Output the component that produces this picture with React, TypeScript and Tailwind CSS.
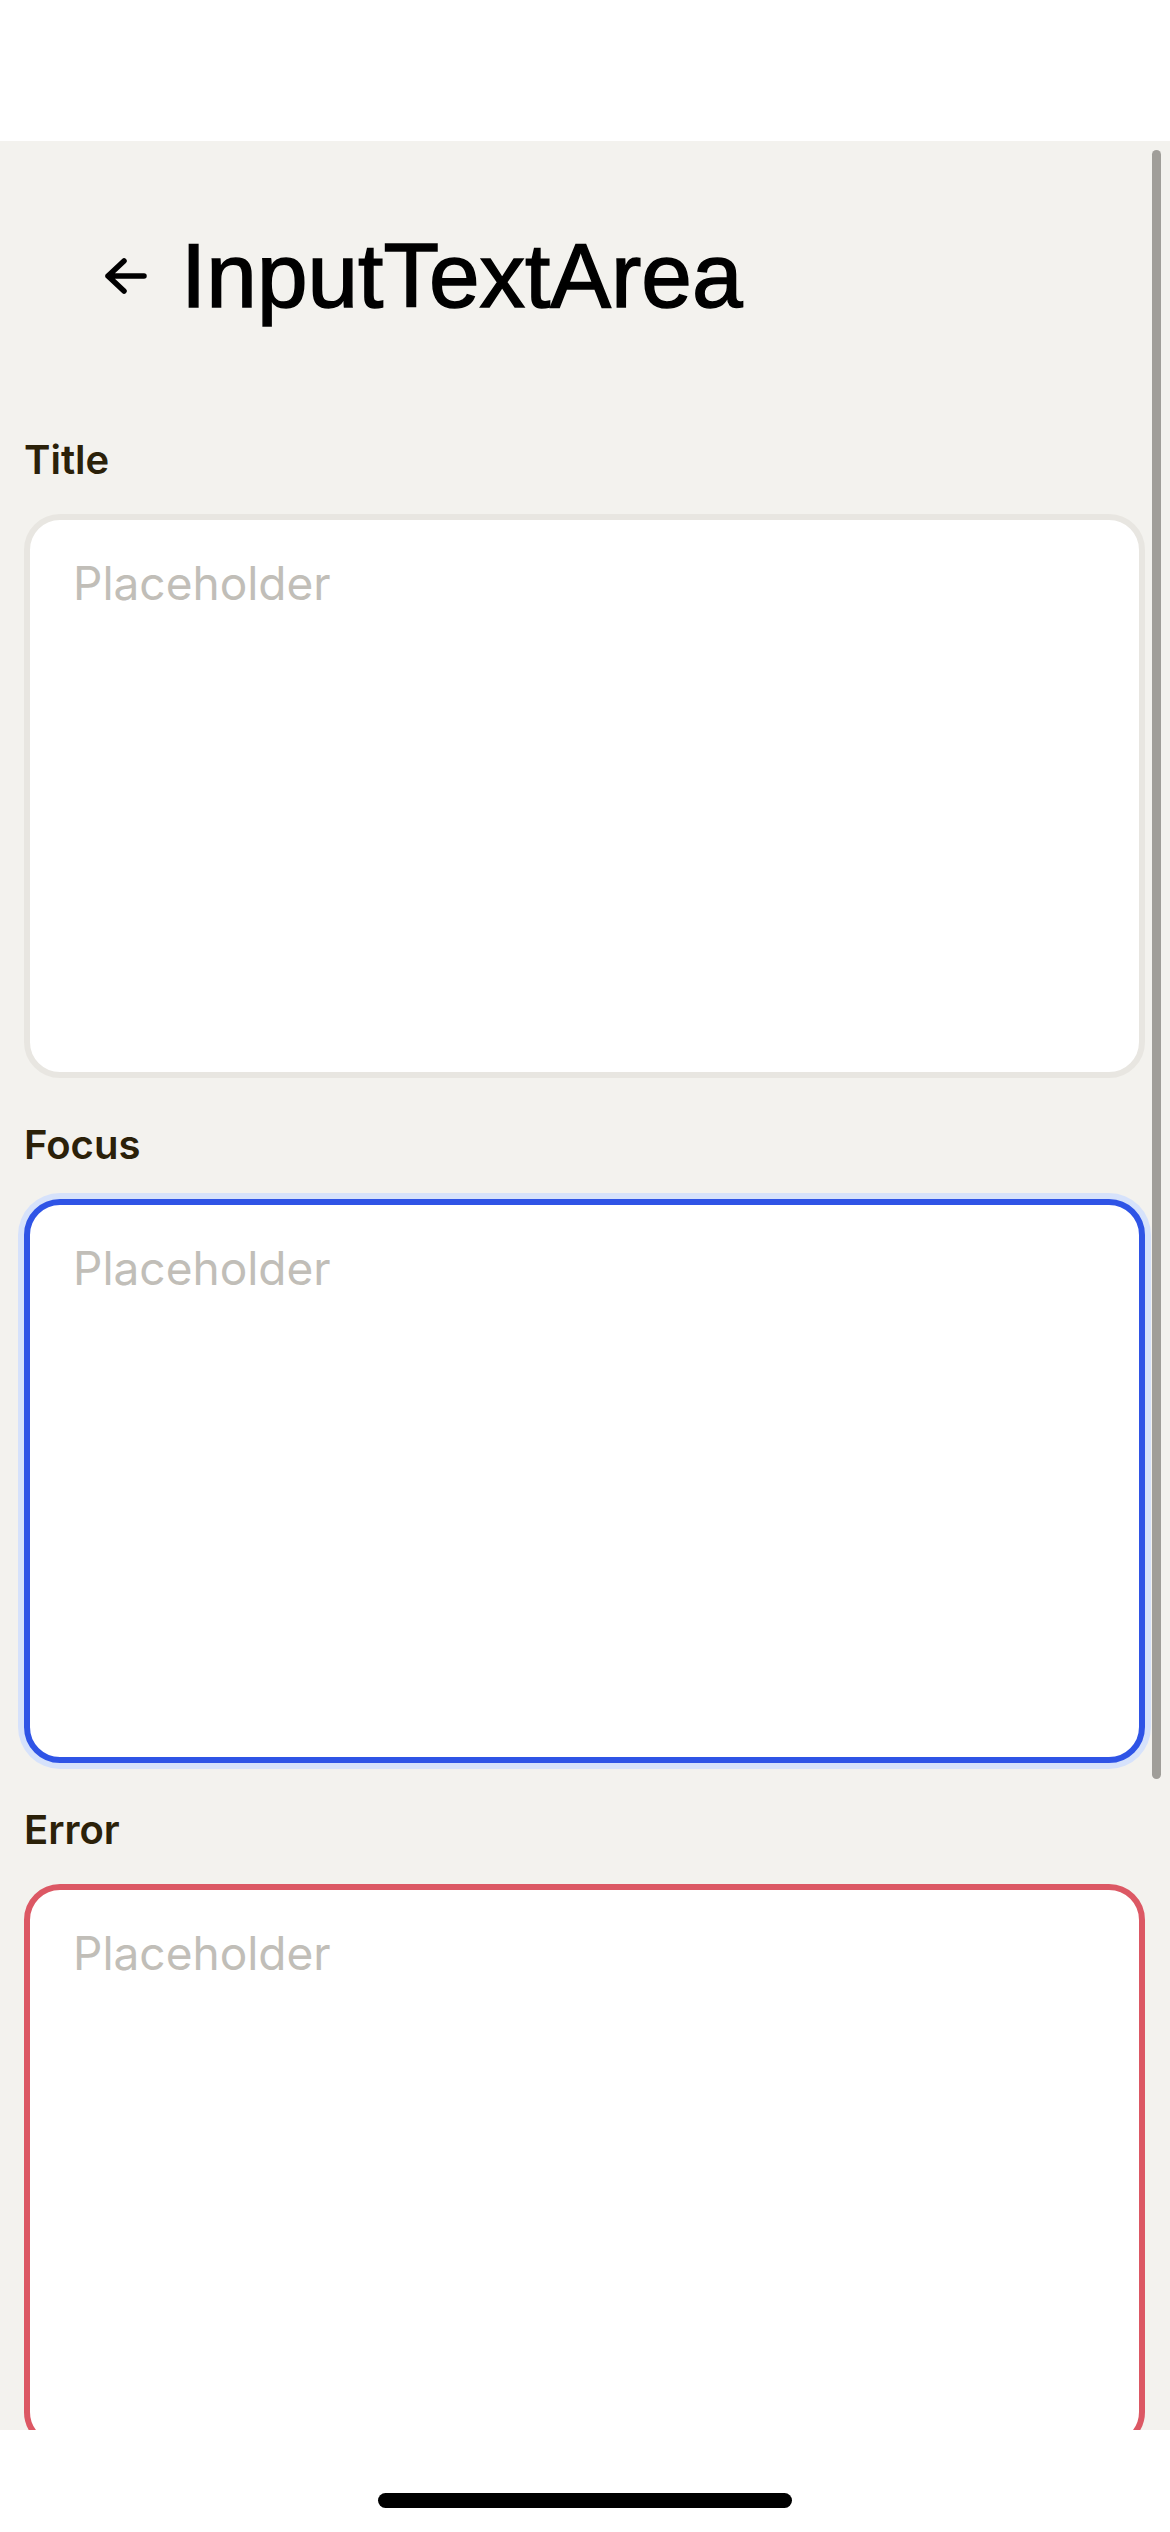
const labelFont = { fontFamily: 'Inter, "Noto Sans", sans-serif' }

type FieldProps = {
  label: string
  state: 'default' | 'focus' | 'error'
}

const Field = ({ label, state }: FieldProps) => {
  const border =
    state === 'focus'
      ? 'border-[#2f54e6] shadow-[0_0_0_6px_#d6e2fb]'
      : state === 'error'
        ? 'border-[#dc5864]'
        : 'border-[#e8e6e1]'

  return (
    <div className="flex flex-col">
      <label className="h-[48px] text-[40px] leading-[48px] font-semibold text-[#2b2109]" style={labelFont}>
        {label}
      </label>
      <textarea
        placeholder="Placeholder"
        className={`mt-[30px] h-[564px] w-full resize-none rounded-[36px] border-[6px] bg-white pt-[35px] pr-[41px] pl-[43px] text-[46px] leading-[56px] text-black outline-none placeholder:text-[#c1beb8] ${border}`}
        style={labelFont}
      />
    </div>
  )
}

export default function App() {
  return (
    <div className="flex h-[2532px] w-[1170px] flex-col bg-white">
      <div className="h-[141px] shrink-0 bg-white" />

      <div className="relative h-[2289px] shrink-0 overflow-hidden bg-[#f3f2ee]">
        <div className="flex flex-col px-[24px] pr-[25px]">
          <header className="flex items-center pt-[89px]">
            <svg width="42" height="36" viewBox="0 0 42 36" className="ml-[81px] shrink-0" fill="none">
              <path d="M3 18H39M19 3 3 18 19 33" stroke="#000" strokeWidth="5.5" strokeLinecap="round" strokeLinejoin="round" />
            </svg>
            <h1
              className="ml-[34px] text-[91px] leading-[91px] text-black [-webkit-text-stroke:1.5px_black]"
              style={{ fontFamily: '"Liberation Sans", Arial, sans-serif' }}
            >
              InputTextArea
            </h1>
          </header>

          <div className="mt-[115px] flex flex-col gap-[43px]">
            <Field label="Title" state="default" />
            <Field label="Focus" state="focus" />
            <Field label="Error" state="error" />
          </div>
        </div>

        <div className="absolute top-[9px] right-[9px] h-[1629px] w-[9px] rounded-full bg-[#a09e99]" />
      </div>

      <div className="flex flex-1 items-start justify-center bg-white pt-[63px]">
        <div className="h-[15px] w-[414px] rounded-full bg-black" />
      </div>
    </div>
  )
}
